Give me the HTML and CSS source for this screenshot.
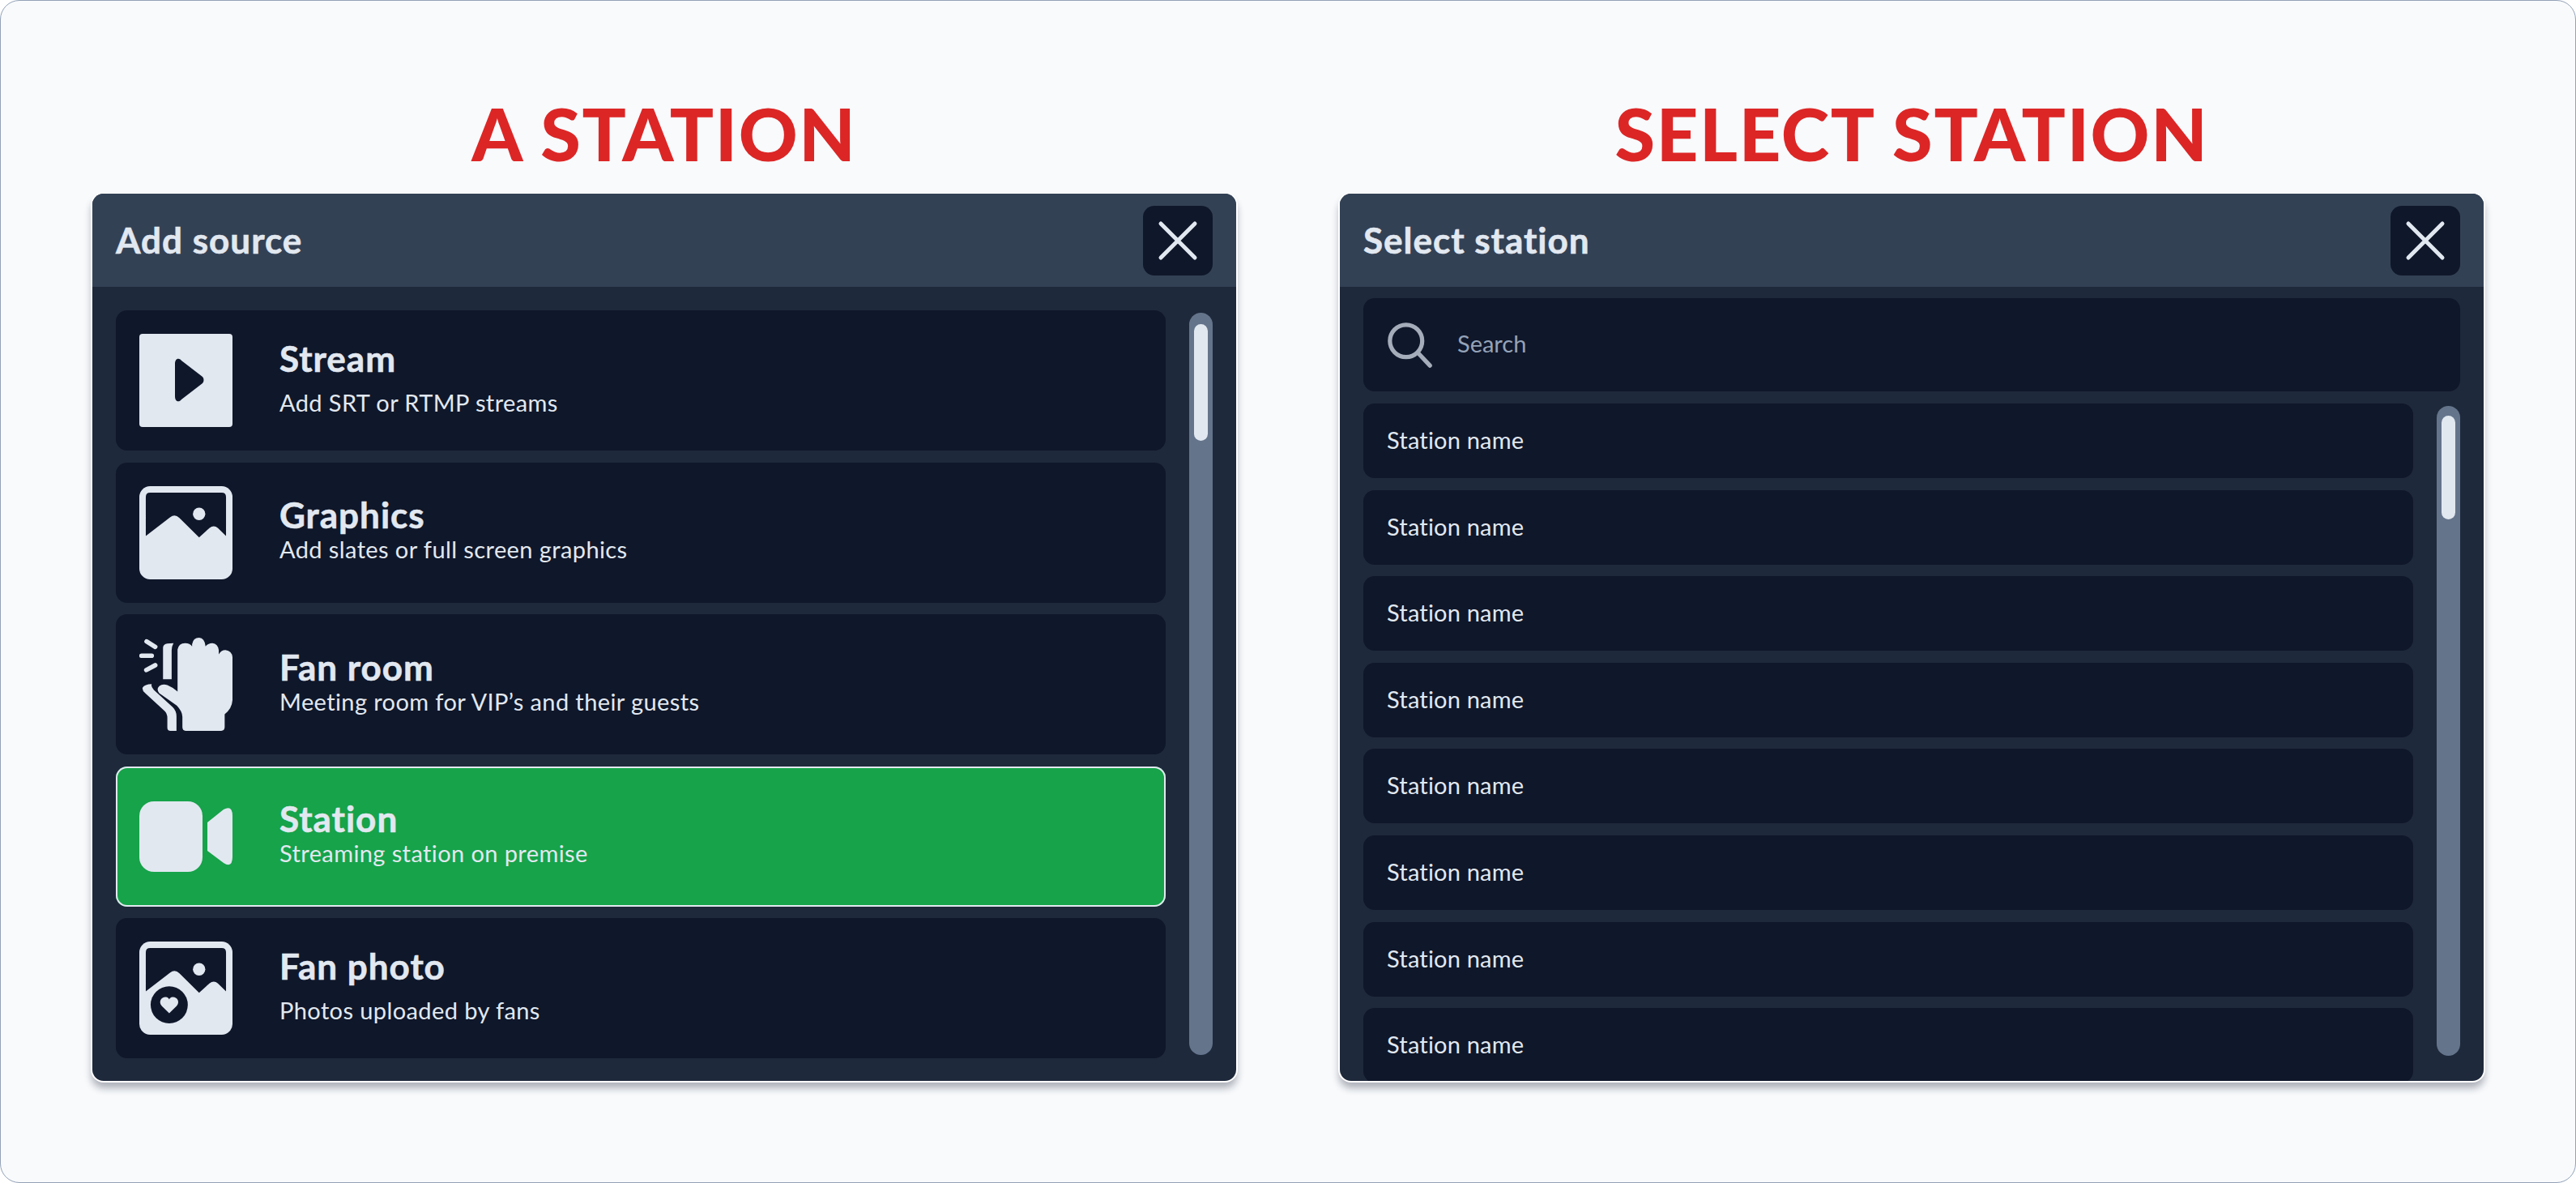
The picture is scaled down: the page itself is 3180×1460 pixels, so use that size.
FILE: index.html
```html
<!DOCTYPE html>
<html lang="en">
<head>
<meta charset="utf-8">
<title>Add source / Select station</title>
<link rel="stylesheet" href="styles.css">
</head>
<body>
<main class="frame">
  <section class="column">
    <h1 class="heading">A STATION</h1>
    <div class="panel">
      <header class="panel-head">
        <h2 class="panel-title">Add source</h2>
        <button class="close" type="button" aria-label="Close">
          <svg class="close-icon" viewBox="0 0 50 50"><path d="M4 4L46 46M46 4L4 46"/></svg>
        </button>
      </header>
      <div class="panel-body">
        <div class="source-row">
          <ul class="source-list">
            <li class="source">
              <svg class="source-icon" viewBox="0 0 115 115">
                <rect class="ink" width="115" height="115" rx="4"/>
                <path class="hole" d="M44 37C44 30 49 29 52 33L78 53C80 55 80 59 78 61L52 81C49 85 44 84 44 77Z"/>
              </svg>
              <div class="source-text spaced">
                <div class="source-name">Stream</div>
                <div class="source-desc">Add SRT or RTMP streams</div>
              </div>
            </li>
            <li class="source">
              <svg class="source-icon" viewBox="66 60 346 346">
                <rect class="ink" x="66" y="60" width="346" height="346" rx="40"/>
                <path class="hole" d="M90 245V100Q90 84 106 84H372Q388 84 388 100V245L358 216Q343 202 326 216L288 250L215 178Q198 161 180 176Z"/>
                <circle class="ink" cx="288" cy="163" r="23"/>
              </svg>
              <div class="source-text">
                <div class="source-name">Graphics</div>
                <div class="source-desc">Add slates or full screen graphics</div>
              </div>
            </li>
            <li class="source">
              <svg class="source-icon" viewBox="66 78 346 346">
                <path class="ink-line" d="M93 92L125 112M74 145H112M92 198L125 180"/>
                <path class="ink" d="M154 114Q156 102 170 100L193 98Q186 110 186 125V232H154Z"/>
                <path class="ink" d="M208 278V122Q212 98 236 98Q254 98 262 110V102Q266 78 288 78Q308 78 312 110Q322 98 337 98Q358 100 361 124V140Q370 124 386 124Q410 128 412 150V310Q410 342 383 362V410Q383 424 370 424H238Q226 424 226 410V372Q226 352 205 330L140 284Q128 270 140 258Q152 248 170 254Q190 262 208 278Z"/>
                <path class="ink" d="M112 250Q86 250 78 264Q76 274 88 284L160 350Q170 360 170 376V412Q170 424 182 424H204V370Q204 350 190 336L120 272Q108 260 112 250Z"/>
              </svg>
              <div class="source-text">
                <div class="source-name">Fan room</div>
                <div class="source-desc">Meeting room for VIP’s and their guests</div>
              </div>
            </li>
            <li class="source selected">
              <svg class="source-icon" viewBox="0 0 115 115">
                <rect class="ink" x="0" y="14" width="78" height="87" rx="18"/>
                <path class="ink" d="M84 40L104 24Q115 18 115 32V82Q115 97 104 90L84 75Z"/>
              </svg>
              <div class="source-text">
                <div class="source-name">Station</div>
                <div class="source-desc">Streaming station on premise</div>
              </div>
            </li>
            <li class="source">
              <svg class="source-icon" viewBox="66 60 346 346">
                <rect class="ink" x="66" y="60" width="346" height="346" rx="40"/>
                <path class="hole" d="M90 245V100Q90 84 106 84H372Q388 84 388 100V245L358 216Q343 202 326 216L288 250L215 178Q198 161 180 176Z"/>
                <circle class="ink" cx="288" cy="163" r="23"/>
                <circle class="hole" cx="177" cy="295" r="69"/>
                <path class="ink" d="M177 326L150 300C134 282 150 264 165 266C171 267 175 270 177 275C179 270 183 267 189 266C204 264 220 282 204 300Z"/>
              </svg>
              <div class="source-text spaced">
                <div class="source-name">Fan photo</div>
                <div class="source-desc">Photos uploaded by fans</div>
              </div>
            </li>
          </ul>
          <div class="track track-sources"><div class="thumb thumb-sources"></div></div>
        </div>
      </div>
    </div>
  </section>

  <section class="column">
    <h1 class="heading">SELECT STATION</h1>
    <div class="panel">
      <header class="panel-head">
        <h2 class="panel-title">Select station</h2>
        <button class="close" type="button" aria-label="Close">
          <svg class="close-icon" viewBox="0 0 50 50"><path d="M4 4L46 46M46 4L4 46"/></svg>
        </button>
      </header>
      <div class="panel-body compact">
        <div class="search">
          <svg class="search-icon" viewBox="0 0 60 60"><circle cx="25" cy="25" r="21"/><path d="M41 41L56 57"/></svg>
          <span class="search-text">Search</span>
        </div>
        <div class="station-row">
          <ul class="station-list">
            <li class="station">Station name</li>
            <li class="station">Station name</li>
            <li class="station">Station name</li>
            <li class="station">Station name</li>
            <li class="station">Station name</li>
            <li class="station">Station name</li>
            <li class="station">Station name</li>
            <li class="station">Station name</li>
          </ul>
          <div class="track track-stations"><div class="thumb thumb-stations"></div></div>
        </div>
      </div>
    </div>
  </section>
</main>
</body>
</html>
```

FILE: styles.css
```css
* { box-sizing: border-box; }
html, body { margin: 0; padding: 0; background: #fff; }
body { width: 3180px; height: 1460px; overflow: hidden; font-family: Lato, "Open Sans", sans-serif; color: #e2e8f0; }
ul { list-style: none; margin: 0; padding: 0; }
h1, h2 { margin: 0; }

.frame {
  width: 3180px; height: 1460px;
  display: grid; grid-template-columns: 1412px 1412px; column-gap: 128px;
  padding-left: 113px;
  background: #f8fafc;
  border: 1px solid #94a3b8;
  border-radius: 24px;
}
.column { display: flex; flex-direction: column; align-items: stretch; }

.heading {
  height: 238px; padding-top: 111px;
  font-size: 90px; line-height: 104px; font-weight: 900;
  letter-spacing: 1.7px;
  text-align: center; color: #dc2626;
  white-space: nowrap;
}

.panel {
  height: 1095px; overflow: hidden;
  display: flex; flex-direction: column;
  background: #1e293b;
  border-radius: 14px;
  box-shadow: 0 0 0 2px #fff, 0 8px 10px 1px rgba(15, 23, 42, .32);
}
.panel-head {
  flex: none; height: 115px;
  display: flex; align-items: center; justify-content: space-between;
  padding: 0 29px;
  background: #334155;
}
.panel-title { font-size: 44px; line-height: 52px; font-weight: 700; letter-spacing: 1px; padding-bottom: 2px; color: #e2e8f0; -webkit-text-stroke: .6px #e2e8f0; }
.close {
  width: 86px; height: 86px; padding: 0; border: 0; border-radius: 14px;
  display: flex; align-items: center; justify-content: center;
  background: #0f172a;
}
.close-icon { width: 50px; height: 50px; fill: none; stroke: #e2e8f0; stroke-width: 5; stroke-linecap: round; }

.panel-body { flex: 1; min-height: 0; padding: 29px 29px 0; }
.panel-body.compact { padding-top: 14px; display: flex; flex-direction: column; gap: 15px; }

.source-row, .station-row { display: flex; gap: 29px; align-items: flex-start; }
.source-list { width: 1296px; display: flex; flex-direction: column; gap: 14.5px; }
.source {
  height: 173px; padding-left: 29px;
  display: flex; align-items: center; gap: 58px;
  background: #0f172a; border-radius: 14px;
}
.source.selected { background: #16a34a; box-shadow: inset 0 0 0 2px #e2e8f0; }
.source-icon { flex: none; width: 115px; height: 115px; }
.ink { fill: #e2e8f0; }
.hole { fill: #0f172a; }
.ink-line { fill: none; stroke: #e2e8f0; stroke-width: 17; stroke-linecap: round; }
.source-text { display: flex; flex-direction: column; padding-bottom: 8px; }
.source-text.spaced { gap: 12px; }
.source-name { font-size: 44px; line-height: 50px; font-weight: 700; letter-spacing: 1px; color: #e2e8f0; -webkit-text-stroke: .6px #e2e8f0; }
.source-desc { font-size: 29px; line-height: 36px; letter-spacing: .4px; color: #e2e8f0; }

.track { flex: none; width: 29px; margin-top: 3px; padding-top: 14px; background: #64748b; border-radius: 15px; }
.track-sources { height: 916px; }
.track-stations { height: 802px; padding-top: 12px; }
.thumb { width: 17px; margin: 0 auto; background: #e2e8f0; border-radius: 9px; }
.thumb-sources { height: 144px; }
.thumb-stations { height: 128px; }

.search {
  flex: none; height: 115px; padding-left: 29px;
  display: flex; align-items: center; gap: 30px;
  background: #0f172a; border-radius: 14px;
}
.search-icon { flex: none; width: 57px; height: 57px; fill: none; stroke: #a5adba; stroke-width: 5.5; stroke-linecap: round; }
.search-text { font-size: 29px; line-height: 36px; padding-bottom: 3px; color: #94a3b8; }

.station-list { width: 1296px; display: flex; flex-direction: column; gap: 14.6px; }
.station {
  height: 92px; padding-left: 29px; padding-bottom: 3px;
  display: flex; align-items: center;
  font-size: 29px; letter-spacing: .2px; color: #e2e8f0;
  background: #0f172a; border-radius: 14px;
}
```
